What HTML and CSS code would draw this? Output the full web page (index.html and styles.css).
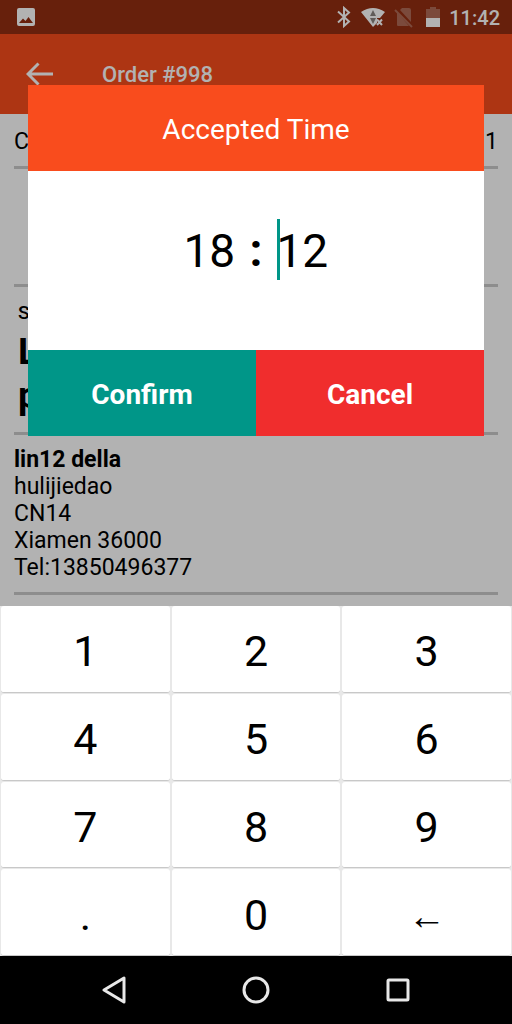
FILE: index.html
```html
<!DOCTYPE html>
<html lang="en">
<head>
<meta charset="utf-8">
<meta name="viewport" content="width=device-width, initial-scale=1">
<title>Order #998</title>
<link rel="stylesheet" href="styles.css">
</head>
<body>
<div class="screen">
  <div class="app">
    <header class="status-bar">
      <svg class="status-picture" viewBox="0 0 20 20" width="20" height="20"><path fill-rule="evenodd" d="M3 1H17Q19 1 19 3V17Q19 19 17 19H3Q1 19 1 17V3Q1 1 3 1ZM3 16H17L12.500 10L9.500 14L7 11.500Z"/></svg>
      <svg class="bluetooth" viewBox="0 0 16 22" width="16" height="22"><path d="M2 5.500L13 15.500L8 20V2L13 6.500L2 16.500"/></svg>
      <svg class="wifi" viewBox="0 0 26 22" width="26" height="22"><path class="fan" d="M1 6Q13-2 25 6L20 12H17V17L13 21Z"/><path class="traffic" d="M10 10L13 4L16 10ZM10 12H16L13 18Z"/><path class="cross" d="M17 13.500L22 19M22 13.500L17 19"/></svg>
      <svg class="no-sim" viewBox="0 0 20 22" width="20" height="22"><path class="sim" d="M8 2H15Q17 2 17 4V16L6 4ZM3 6L15 20H4Q3 20 3 19Z"/><path class="slash" d="M1 4L18 21"/></svg>
      <svg class="battery" viewBox="0 0 14 22" width="14" height="22"><path class="empty" d="M0 3H4V1H10V3H14V12H0Z"/><path d="M0 12H14V21H0Z"/></svg>
      <time class="clock">11:42</time>
    </header>
    <div class="app-bar">
      <button class="back" aria-label="Back"><svg viewBox="0 0 28 24" width="28" height="24"><path d="M27 12H2M12.500 1.500L2 12L12.500 22.500"/></svg></button>
      <h1 class="title">Order #998</h1>
    </div>
    <main class="order">
      <section class="summary"><span>C</span><span>1</span></section>
      <section class="blank"></section>
      <section class="item">
        <p class="item-label">S</p>
        <p class="item-name">L<br>p</p>
      </section>
      <section class="address">
        <strong>lin12 della</strong>
        <span>hulijiedao</span>
        <span>CN14</span>
        <span>Xiamen 36000</span>
        <span>Tel:13850496377</span>
      </section>
    </main>
    <div class="scrim">
      <form class="dialog" role="dialog" aria-labelledby="dialog-title">
        <h2 class="dialog-title" id="dialog-title">Accepted Time</h2>
        <div class="time">
          <input class="time-input" aria-label="Hour" value="18">
          <span class="colon">:</span>
          <span class="minute"><input class="time-input" aria-label="Minute" value="12"><span class="caret"></span></span>
        </div>
        <div class="actions">
          <button type="button" class="confirm">Confirm</button>
          <button type="button" class="cancel">Cancel</button>
        </div>
      </form>
    </div>
  </div>
  <div class="keypad">
    <button class="key">1</button><button class="key">2</button><button class="key">3</button>
    <button class="key">4</button><button class="key">5</button><button class="key">6</button>
    <button class="key">7</button><button class="key">8</button><button class="key">9</button>
    <button class="key">.</button><button class="key">0</button><button class="key erase" aria-label="Delete">←</button>
  </div>
  <nav class="nav-bar">
    <button aria-label="Back"><svg viewBox="0 0 28 28" width="28" height="28"><path d="M24 2V26L4 14Z"/></svg></button>
    <button aria-label="Home"><svg viewBox="0 0 28 28" width="28" height="28"><circle cx="14" cy="14" r="12"/></svg></button>
    <button aria-label="Recent apps"><svg viewBox="0 0 28 28" width="28" height="28"><rect x="4" y="4" width="20" height="20" rx="1"/></svg></button>
  </nav>
</div>
</body>
</html>
```
FILE: styles.css
```css
* { box-sizing: border-box; }
body { margin: 0; font-family: Roboto, "Liberation Sans", sans-serif; color: #000; }
h1, h2, p { margin: 0; }
button, input { margin: 0; padding: 0; border: 0; background: none; font: inherit; color: inherit; }
svg { display: block; fill: none; flex: none; }

.screen { display: flex; flex-direction: column; min-height: 100vh; }
.app { position: relative; flex: 1; background: #fff; }

.status-bar { display: flex; align-items: center; height: 34px; padding: 0 12px 0 16px; background: #942e12; color: #fff; }
.status-bar svg { fill: #fff; }
.status-picture { margin-right: auto; }
.status-bar .bluetooth { fill: none; stroke: #fff; stroke-width: 2; margin-right: 8px; }
.wifi { margin-right: 8px; }
.wifi .traffic { fill: #8a8580; }
.wifi .cross { stroke: #fff; stroke-width: 2; }
.no-sim { margin-right: 12px; }
.no-sim .sim { fill: #b06a56; }
.no-sim .slash { stroke: #b06a56; stroke-width: 2; }
.battery { margin-right: 9px; }
.battery .empty { fill: #b06a56; }
.clock { font-size: 20px; font-weight: 500; line-height: 22px; padding-top: 2px; }

.app-bar { display: flex; align-items: center; height: 80px; padding-left: 26px; background: #f84c1c; color: #fff; }
.back { margin-right: 48px; }
.back svg { stroke: #fff; stroke-width: 3; }
.title { font-size: 22px; font-weight: 500; }

.order { padding: 0 14px; font-size: 23px; line-height: 27px; }
.order section { border-bottom: 3px solid #cbcbcb; }
.order .summary { display: flex; justify-content: space-between; padding: 14px 0 11px; }
.blank { height: 118px; }
.item { padding: 14px 4px; }
.item-label { font-size: 19px; font-weight: 500; line-height: 24px; margin-bottom: 5px; }
.item-name { font-size: 37px; font-weight: 700; line-height: 44px; }
.address { display: flex; flex-direction: column; padding: 11px 0; }

.scrim { position: absolute; inset: 0; padding: 85px 28px 0; background: rgba(0, 0, 0, .3); }
.dialog { background: #fff; }
.dialog-title { padding: 28px 0 24px; background: #f94c1d; color: #fff; font-size: 28px; font-weight: 400; line-height: 34px; text-align: center; }
.time { display: flex; justify-content: center; align-items: center; height: 179px; padding-bottom: 22px; font-size: 46px; }
.time-input { width: 52px; height: 61px; padding-top: 2px; outline: 0; }
.colon { width: 41px; text-align: center; font-weight: 700; }
.minute { position: relative; display: flex; }
.caret { position: absolute; left: 0; top: 0; width: 3px; height: 61px; background: #009688; }
.actions { display: grid; grid-template-columns: 1fr 1fr; color: #fff; font-size: 28px; font-weight: 700; }
.actions button { height: 86px; padding-top: 3px; }
.confirm { background: #009688; }
.cancel { background: #f02d2d; }

.keypad { display: grid; grid-template-columns: repeat(3, 1fr); grid-auto-rows: 1fr; row-gap: 1px; height: 350px; background: #e8e8e8; }
.key { margin: 0 1px; padding-top: 5px; border-radius: 3px; border-bottom: 1px solid #c8c8c8; background: #fff; font-size: 43px; }
.erase { font-family: "Liberation Sans", sans-serif; font-size: 28px; }
.key.erase { padding-top: 8px; font-size: 38px; }

.nav-bar { display: flex; justify-content: center; align-items: center; gap: 114px; height: 68px; background: #000; }
.nav-bar svg { stroke: #e8e8e8; stroke-width: 3; stroke-linejoin: round; }
```
